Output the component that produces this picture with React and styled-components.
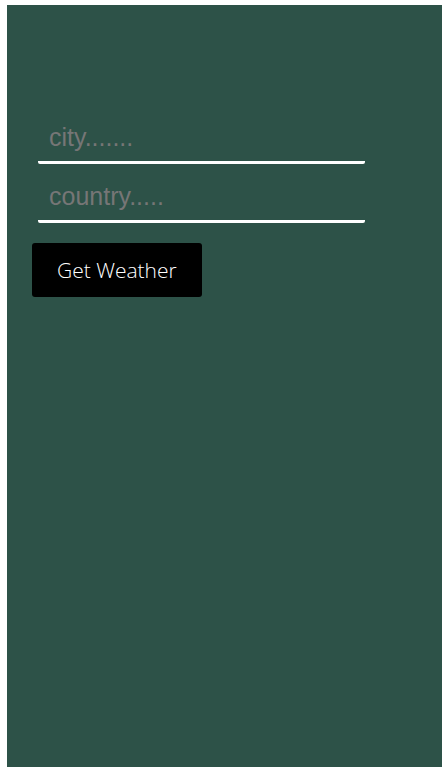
import React from 'react';
import styled, { createGlobalStyle } from 'styled-components';

const GlobalStyle = createGlobalStyle`
  body {
    margin: 0;
    background: #ffffff;
    font-family: 'Liberation Sans', Arial, sans-serif;
  }
`;

const Panel = styled.div`
  margin: 5px 5px 0 7px;
  min-height: calc(100vh - 5px);
  background: #2d5248;
  padding: 109px 25px 0;
  box-sizing: border-box;
`;

const Form = styled.form`
  display: flex;
  flex-direction: column;
  align-items: flex-start;
`;

const Field = styled.input`
  width: 327px;
  height: 50px;
  margin: 0 0 ${(p) => p.$gap}px 6px;
  padding: 9px 11px;
  box-sizing: border-box;
  background: transparent;
  border: none;
  border-bottom: 3px solid #ffffff;
  border-radius: 0 0 2px 2px;
  font-family: 'Liberation Sans', Arial, sans-serif;
  font-size: 25px;
  line-height: 29px;
  color: #ffffff;
  outline: none;

  &::placeholder {
    color: #767676;
  }
`;

const Button = styled.button`
  height: 54px;
  padding: 0 25px;
  background: #000000;
  color: #ffffff;
  border: none;
  border-radius: 3px;
  font-family: 'Open Sans', 'Segoe UI', sans-serif;
  font-weight: 300;
  font-size: 21px;
  line-height: 26px;
  cursor: pointer;
`;

function App() {
  return (
    <>
      <GlobalStyle />
      <Panel>
        <Form onSubmit={(e) => e.preventDefault()}>
          <Field type="text" placeholder="city......." $gap={9} />
          <Field type="text" placeholder="country....." $gap={20} />
          <Button type="submit">Get Weather</Button>
        </Form>
      </Panel>
    </>
  );
}

export default App;
